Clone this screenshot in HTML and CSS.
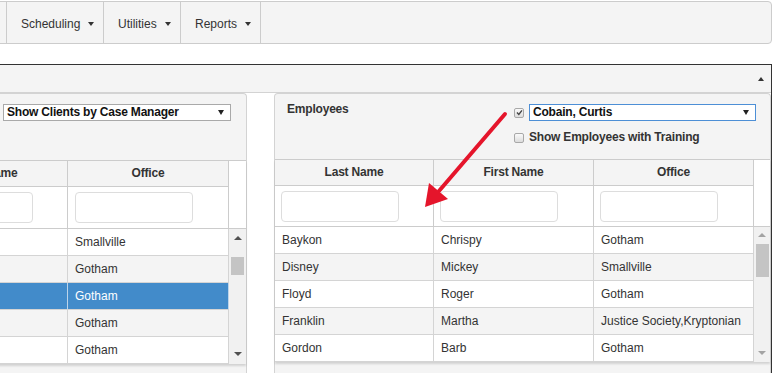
FILE: index.html
```html
<!DOCTYPE html>
<html lang="en">
<head>
<meta charset="utf-8">
<title>Scheduling</title>
<link rel="stylesheet" href="styles.css">
</head>
<body>
<nav class="topnav">
  <div class="nav-item nav-stub"></div>
  <div class="nav-item w-sched">Scheduling<span class="caret"></span></div>
  <div class="nav-item w-util">Utilities<span class="caret"></span></div>
  <div class="nav-item w-rep">Reports<span class="caret"></span></div>
</nav>

<section class="panel">
  <header class="panel-head"><span class="collapse-icon"></span></header>
  <div class="panel-body">

    <div class="subpanel clients">
      <div class="sub-head">
        <div class="sub-title">Clients</div>
        <div class="sub-controls">
          <div class="ctrl-row">
            <span class="cb"><svg viewBox="0 0 7 7"><path d="M1 3.6 L2.8 5.4 L6 1.4" stroke="#444" stroke-width="1.4" fill="none"/></svg></span>
            <div class="select wide"><span>Show Clients by Case Manager</span><span class="select-caret"></span></div>
          </div>
        </div>
      </div>
      <div class="grid grid-left">
        <div class="th">Last Name</div>
        <div class="th">First Name</div>
        <div class="th">Office</div>
        <div class="gutter-head"></div>
        <div class="tf"><span class="filter"></span></div>
        <div class="tf"><span class="filter"></span></div>
        <div class="tf"><span class="filter"></span></div>
        <div class="rows">
          <div class="row"><div class="td">Kent</div><div class="td">Clark</div><div class="td">Smallville</div></div>
          <div class="row"><div class="td">Wayne</div><div class="td">Bruce</div><div class="td">Gotham</div></div>
          <div class="row selected"><div class="td">Kyle</div><div class="td">Selina</div><div class="td">Gotham</div></div>
          <div class="row"><div class="td">Pennyworth</div><div class="td">Alfred</div><div class="td">Gotham</div></div>
          <div class="row"><div class="td">Grayson</div><div class="td">Dick</div><div class="td">Gotham</div></div>
        </div>
        <div class="vscroll active">
          <span class="sb-up"></span>
          <span class="sb-thumb" style="height:18px;margin-top:17px"></span>
          <span class="sb-down"></span>
        </div>
      </div>
    </div>

    <div class="subpanel employees">
      <div class="sub-head">
        <div class="sub-title">Employees</div>
        <div class="sub-controls">
          <div class="ctrl-row">
            <span class="cb"><svg viewBox="0 0 7 7"><path d="M1 3.6 L2.8 5.4 L6 1.4" stroke="#444" stroke-width="1.4" fill="none"/></svg></span>
            <div class="select focus"><span>Cobain, Curtis</span><span class="select-caret"></span></div>
          </div>
          <label class="ctrl-row second"><span class="cb"></span><span>Show Employees with Training</span></label>
        </div>
      </div>
      <div class="grid grid-right">
        <div class="th">Last Name</div>
        <div class="th">First Name</div>
        <div class="th">Office</div>
        <div class="gutter-head"></div>
        <div class="tf"><span class="filter"></span></div>
        <div class="tf"><span class="filter"></span></div>
        <div class="tf"><span class="filter"></span></div>
        <div class="rows">
          <div class="row"><div class="td">Baykon</div><div class="td">Chrispy</div><div class="td">Gotham</div></div>
          <div class="row"><div class="td">Disney</div><div class="td">Mickey</div><div class="td">Smallville</div></div>
          <div class="row"><div class="td">Floyd</div><div class="td">Roger</div><div class="td">Gotham</div></div>
          <div class="row"><div class="td">Franklin</div><div class="td">Martha</div><div class="td">Justice Society,Kryptonian</div></div>
          <div class="row"><div class="td">Gordon</div><div class="td">Barb</div><div class="td">Gotham</div></div>
        </div>
        <div class="vscroll">
          <span class="sb-up"></span>
          <span class="sb-thumb" style="height:33px;margin-top:7px"></span>
          <span class="sb-down"></span>
        </div>
      </div>
    </div>

  </div>
</section>

<svg class="annot-arrow" width="775" height="373" viewBox="0 0 775 373">
  <line x1="505" y1="114" x2="439" y2="191" stroke="#e5152b" stroke-width="4" stroke-linecap="round"/>
  <polygon points="425,207 429,183 448,199" fill="#e5152b"/>
</svg>
</body>
</html>
```

FILE: styles.css
```css
* { box-sizing: border-box; }
html, body { margin: 0; padding: 0; overflow: hidden; }
body {
  background: #fff;
  font-family: "Liberation Sans", Arial, sans-serif;
  font-size: 12px;
  color: #333;
  width: 775px;
  height: 373px;
  position: relative;
}

/* top navigation */
.topnav {
  display: flex;
  height: 43px;
  width: 812px;
  margin: 1px 0 0 -40px;
  background: #f4f4f4;
  border: 1px solid #ccc;
  border-radius: 4px;
}
.nav-item {
  display: flex;
  align-items: center;
  padding: 2px 0 0 14px;
  border-right: 1px solid #ccc;
  color: #333;
  white-space: nowrap;
}
.nav-stub { width: 46px; padding: 0; }
.w-sched { width: 97px; }
.w-util { width: 77px; }
.w-rep { width: 80px; }
.caret {
  display: inline-block;
  margin-left: 8px;
  width: 0; height: 0;
  border-top: 4px solid #333;
  border-left: 3px solid transparent;
  border-right: 3px solid transparent;
}

/* outer panel */
.panel {
  margin: 20px 0 0 -260px;
  width: 1032px;
  border: 1px solid #333;
  border-bottom: none;
}
.panel-head {
  height: 28px;
  background: #f4f4f4;
  border-bottom: 1px solid #d3d3d3;
  display: flex;
  justify-content: flex-end;
  align-items: center;
  padding-right: 7px;
}
.collapse-icon {
  width: 0; height: 0;
  border-bottom: 4px solid #333;
  border-left: 3px solid transparent;
  border-right: 3px solid transparent;
}
.panel-body {
  display: flex;
  gap: 27px;
  padding-left: 9px;
  background: #fff;
}

/* sub panels */
.subpanel {
  width: 497px;
  background: #f4f4f4;
  border: 1px solid #d3d3d3;
  border-bottom: none;
  border-radius: 4px 4px 0 0;
  padding-bottom: 30px;
}
.sub-head {
  display: flex;
  justify-content: space-between;
  height: 65px;
  padding: 8px 14px 0 12px;
}
.clients .sub-head { height: 66px; padding-right: 15px; }
.sub-title {
  font-weight: bold;
  line-height: 14px;
  letter-spacing: -0.2px;
  color: #333;
}
.sub-controls {
  margin-top: 2px;
  display: flex;
  flex-direction: column;
}
.ctrl-row {
  display: flex;
  align-items: center;
  gap: 5px;
  font-weight: bold;
  letter-spacing: -0.2px;
  color: #333;
}
.ctrl-row.second {
  margin-top: 9px;
  line-height: 15px;
}
.cb {
  flex: none;
  width: 10px;
  height: 10px;
  border: 1px solid #a8a8a8;
  border-radius: 2px;
  background: linear-gradient(#fafafa, #dcdcdc);
  display: inline-flex;
  align-items: center;
  justify-content: center;
}
.cb svg { width: 7px; height: 7px; display: block; }
.select {
  width: 227px;
  height: 17px;
  border: 1px solid #a9a9a9;
  background: #fff;
  display: flex;
  align-items: center;
  justify-content: space-between;
  padding: 0 6px 0 3px;
  line-height: 15px;
  font-weight: bold;
  color: #111;
}
.select.wide { width: 228px; }
.select.focus { border-color: #4d8fd6; }
.select-caret {
  width: 0; height: 0;
  border-top: 5px solid #222;
  border-left: 3px solid transparent;
  border-right: 3px solid transparent;
}

/* grid tables */
.grid {
  display: grid;
  border-top: 1px solid #ccc;
  background: #fff;
  box-shadow: 0 2px 2px rgba(0, 0, 0, 0.14);
}
.grid-right { grid-template-columns: 159px 160px 160px 16px; }
.grid-left { grid-template-columns: 157px 160px 161px 17px; }
.th {
  height: 26px;
  background: #f4f4f4;
  border-right: 1px solid #ccc;
  border-bottom: 1px solid #ccc;
  font-weight: bold;
  letter-spacing: -0.2px;
  text-align: center;
  line-height: 25px;
  color: #333;
}
.gutter-head {
  grid-row: span 2;
  background: #fff;
  border-bottom: 1px solid #ccc;
}
.tf {
  height: 41px;
  border-right: 1px solid #ccc;
  border-bottom: 1px solid #ccc;
  padding: 5px 6px 0;
  background: #fff;
}
.grid-left .tf { height: 42px; padding: 5px 7px 0; }
.filter {
  display: block;
  width: 118px;
  height: 31px;
  border: 1px solid #ddd;
  border-radius: 4px;
  background: #fff;
}
.rows { grid-column: 1 / 4; }
.row { display: grid; }
.grid-right .row { grid-template-columns: 159px 160px 160px; }
.grid-left .row { grid-template-columns: 157px 160px 161px; }
.row:nth-child(even) { background: #f4f4f4; }
.row.selected { background: #428bca; color: #fff; }
.td {
  height: 27px;
  line-height: 26px;
  padding-left: 7px;
  border-right: 1px solid #d4d4d4;
  border-bottom: 1px solid #d4d4d4;
  white-space: nowrap;
  overflow: hidden;
}
.row.selected .td { border-right-color: #bcd4ea; }

/* scrollbar */
.vscroll {
  background: #f1f1f1;
  display: flex;
  flex-direction: column;
  align-items: center;
}
.sb-up {
  margin-top: 6px;
  width: 0; height: 0;
  border-bottom: 4px solid #a3a3a3;
  border-left: 4px solid transparent;
  border-right: 4px solid transparent;
}
.sb-thumb {
  display: block;
  width: 13px;
  background: #c4c4c4;
}
.sb-down {
  margin-top: auto;
  margin-bottom: 7px;
  width: 0; height: 0;
  border-top: 4px solid #a3a3a3;
  border-left: 4px solid transparent;
  border-right: 4px solid transparent;
}
.vscroll.active .sb-up { margin-top: 7px; border-bottom-color: #505050; }
.vscroll.active .sb-down { margin-bottom: 8px; border-top-color: #505050; }

/* annotation arrow over the page */
.annot-arrow {
  position: absolute;
  left: 0;
  top: 0;
  pointer-events: none;
}
```
